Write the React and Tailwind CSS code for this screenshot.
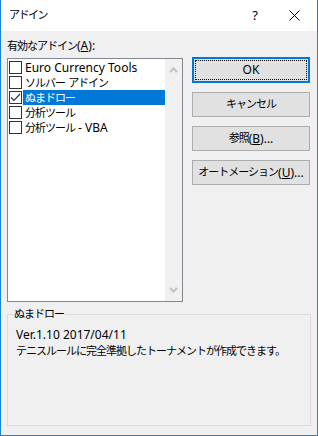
import React from 'react';

const font = { fontFamily: '"Noto Sans", "Noto Sans CJK JP", sans-serif' };

// Japanese glyphs in Noto CJK are wider than the system UI font; tighten them
const J = ({ children }) => <span className="text-[11px] tracking-[-1px]">{children}</span>;

const items = [
  { name: 'Euro Currency Tools', checked: false },
  { name: <><J>ソルバー</J> <J>アドイン</J></>, checked: false },
  { name: <J>ぬまドロー</J>, checked: true, selected: true },
  { name: <J>分析ツール</J>, checked: false },
  { name: <><J>分析ツール</J> - VBA</>, checked: false },
];

const Check = ({ checked }) => (
  <span className="ml-[1px] w-[13px] h-[13px] shrink-0 border border-[#333] bg-white flex items-center justify-center">
    {checked && (
      <svg width="11" height="11" viewBox="0 0 11 11">
        <path d="M1 5.5 L4 8.5 L10 2" fill="none" stroke="#333" strokeWidth="1.2" />
      </svg>
    )}
  </span>
);

const Btn = ({ children, primary }) =>
  primary ? (
    <div className="h-[26px] border-2 border-[#0078d7] bg-[#e1e1e1] p-[1px]">
      <div className="h-full border border-dotted border-black flex items-center justify-center text-[12px] text-black">
        {children}
      </div>
    </div>
  ) : (
    <div className="h-[25px] border border-[#adadad] bg-[#e1e1e1] flex items-center justify-center text-[12px] text-black whitespace-nowrap">
      {children}
    </div>
  );

export default function App() {
  return (
    <div style={font} className="w-[318px] h-[436px] border-x border-b border-[#1883d7] bg-[#f0f0f0] flex flex-col text-[12px] text-black">
      {/* title bar */}
      <div className="h-[31px] bg-white flex items-center shrink-0">
        <span className="ml-[8px] text-[11px] tracking-[-1.5px]">アドイン</span>
        <span className="ml-auto mr-[31px] text-[13px]">?</span>
        <svg className="mr-[17px]" width="11" height="11" viewBox="0 0 11 11">
          <path d="M0.5 0.5 L10.5 10.5 M10.5 0.5 L0.5 10.5" stroke="#000" strokeWidth="1" />
        </svg>
      </div>

      <div className="flex-1 px-[6px] pt-[7px]">
        <div className="h-[20px] leading-[16px] whitespace-nowrap">
          <J>有効なアドイン</J>(<span className="underline">A</span>):
        </div>

        <div className="flex gap-[9px]">
          {/* list box */}
          <div className="w-[176px] h-[244px] border border-[#828790] bg-white flex shrink-0">
            <div className="flex-1 pt-[1px] min-w-0">
              {items.map((it, i) => (
                <div key={i} className="h-[15px] flex items-center">
                  <Check checked={it.checked} />
                  <span
                    className={`ml-[1px] flex-1 h-[15px] leading-[15px] pl-[2px] whitespace-pre ${
                      it.selected ? 'bg-[#0078d7] text-white' : ''
                    }`}
                  >
                    {it.name}
                  </span>
                </div>
              ))}
            </div>
            <div className="w-[17px] bg-[#f0f0f0] flex flex-col items-center justify-between py-[8px]">
              <svg width="9" height="6" viewBox="0 0 9 6">
                <path d="M1 5 L4.5 1.5 L8 5" fill="none" stroke="#c2c2c2" strokeWidth="2" />
              </svg>
              <svg width="9" height="6" viewBox="0 0 9 6">
                <path d="M1 1 L4.5 4.5 L8 1" fill="none" stroke="#c2c2c2" strokeWidth="2" />
              </svg>
            </div>
          </div>

          {/* buttons */}
          <div className="w-[118px] -mt-[1px] flex flex-col gap-[9px]">
            <Btn primary>OK</Btn>
            <Btn><J>キャンセル</J></Btn>
            <Btn>
              <J>参照</J>(<span className="underline">B</span>)...
            </Btn>
            <Btn>
              <J>オートメーション</J>(<span className="underline">U</span>)...
            </Btn>
          </div>
        </div>

        {/* group box */}
        <div className="mt-[12px] w-[304px] h-[112px] border border-[#dcdcdc] relative px-[8px] pt-[12px]">
          <span className="absolute -top-[9px] left-[5px] bg-[#f0f0f0] px-[1px] leading-[16px]">
            <J>ぬまドロー</J>
          </span>
          <div className="leading-[16px]">Ver.1.10 2017/04/11</div>
          <div className="leading-[16px] whitespace-nowrap">
            <J>テニスルールに完全準拠したトーナメントが作成できます。</J>
          </div>
        </div>
      </div>
    </div>
  );
}
